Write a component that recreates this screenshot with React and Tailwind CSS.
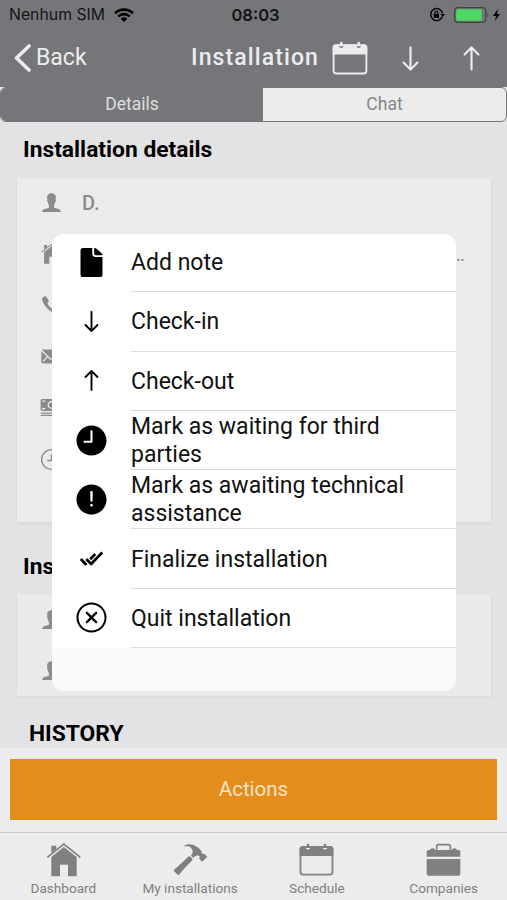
import {
  IoIosAlert,
  IoIosArrowRoundDown,
  IoIosArrowRoundUp,
  IoIosCall,
  IoIosCash,
  IoIosCloseCircleOutline,
  IoIosDocument,
  IoIosDoneAll,
  IoIosHammer,
  IoIosMail,
  IoIosPerson,
  IoIosTime,
} from "react-icons/io";

const ACTIONS = [
  { label: "Add note", icon: IoIosDocument },
  { label: "Check-in", icon: IoIosArrowRoundDown },
  { label: "Check-out", icon: IoIosArrowRoundUp },
  { label: "Mark as waiting for third parties", icon: IoIosTime },
  { label: "Mark as awaiting technical assistance", icon: IoIosAlert },
  { label: "Finalize installation", icon: IoIosDoneAll },
  { label: "Quit installation", icon: IoIosCloseCircleOutline },
];

const TABS = [
  { label: "Dashboard", icon: HomeIcon },
  { label: "My installations", icon: IoIosHammer },
  { label: "Schedule", icon: CalendarIcon },
  { label: "Companies", icon: BriefcaseIcon },
];

const DETAILS = [
  { icon: IoIosPerson, text: "D." },
  { icon: HomeIcon, text: "" },
  { icon: IoIosCall, text: "" },
  { icon: IoIosMail, text: "" },
  { icon: IoIosCash, text: "" },
  { icon: ClockIcon, text: "" },
];

function HomeIcon({ className }) {
  return (
    <svg viewBox="0 0 123 123" className={className} fill="currentColor">
      <path d="M13 55L62.5 15L112 55" fill="none" stroke="currentColor" strokeWidth="5" />
      <path d="M25 20h15v10L25 42z" />
      <path d="M25 54l37.5-30L101 54v58H75V77H51v35H25z" />
    </svg>
  );
}

function CalendarIcon({ className }) {
  return (
    <svg viewBox="0 0 123 123" className={className} fill="none">
      <rect x="13.5" y="24" width="96" height="83" rx="8" stroke="currentColor" strokeWidth="5.5" />
      <path d="M11 51V30q0-8 8-8h9q1 10 8 10t8-10h35q1 10 8 10t8-10h9q8 0 8 8v21z" fill="currentColor" />
      <path d="M36 18v5M87 18v5" stroke="currentColor" strokeWidth="8" strokeLinecap="round" />
    </svg>
  );
}

function BriefcaseIcon({ className }) {
  return (
    <svg viewBox="0 0 123 123" className={className} fill="currentColor">
      <path d="M41 32v-9q0-6 6-6h29q6 0 6 6v9" fill="none" stroke="currentColor" strokeWidth="5" />
      <path d="M11 53V38q0-5 5-5h5q1-5 8-5t8 5h49q1-5 8-5t8 5h5q5 0 5 5v15z" />
      <path d="M11 60h101v44q0 6-6 6H17q-6 0-6-6z" />
    </svg>
  );
}

function ClockIcon({ className }) {
  return (
    <svg viewBox="0 0 24 24" className={className} fill="none" stroke="currentColor" strokeWidth="1.3">
      <circle cx="12" cy="12" r="9.5" />
      <path d="M12 7v6H8" />
    </svg>
  );
}

function StatusBar() {
  return (
    <div className="flex h-[30px] items-center px-[9px] font-[Inter,sans-serif] text-[15.8px] text-black/85">
      <div className="flex flex-1 items-center gap-[9px]">
        <span>Nenhum SIM</span>
        <svg viewBox="0 0 20 14" className="h-[14px] w-5" fill="none" stroke="black" strokeWidth="2.6">
          <path d="M1 5.2a13 13 0 0 1 18 0M4.2 8.4a8.4 8.4 0 0 1 11.6 0" />
          <path d="M10 14l-3.3-3.3a4.7 4.7 0 0 1 6.6 0z" fill="black" stroke="none" />
        </svg>
      </div>
      <span className="ml-1 text-[16.5px] font-semibold">08:03</span>
      <div className="flex flex-1 items-center justify-end">
        <svg viewBox="0 0 16 16" className="mr-[9px] size-4" fill="none" stroke="black" strokeWidth="1.4">
          <path d="M13.4 9.5A6 6 0 1 1 13.6 6.5" />
          <path d="M11.5 7h4.5l-2.2 2.8z" fill="black" stroke="none" />
          <rect x="4.8" y="7" width="5.2" height="4" fill="black" stroke="none" />
          <path d="M5.9 7V5.8a1.5 1.5 0 0 1 3 0V7" strokeWidth="1.1" />
        </svg>
        <svg viewBox="0 0 48 16" className="-mr-[4px] h-4 w-12" fill="none">
          <rect x="0.7" y="0.7" width="31" height="14.6" rx="3.4" stroke="#3f4142" strokeWidth="1.2" />
          <rect x="2.2" y="2.3" width="25.5" height="11.4" rx="1.5" fill="#4cd964" />
          <path d="M33.3 5.5q2.2 2.5 0 5z" fill="#3f4142" />
          <path d="M44 2l-5 7h3.1L41 14l5-7h-3.1z" fill="black" />
        </svg>
      </div>
    </div>
  );
}

function Header() {
  return (
    <div className="flex h-[57px] items-center px-[13px] pb-px text-[#ececee]">
      <svg viewBox="0 0 18 28" className="h-7 w-[18px]" fill="none" stroke="currentColor" strokeWidth="3.6">
        <path d="M16 2L3.5 14L16 26" strokeLinecap="round" strokeLinejoin="round" />
      </svg>
      <span className="ml-[5px] text-[23px]">Back</span>
      <span className="ml-auto text-[23px] font-medium tracking-[1.1px]">Installation</span>
      <CalendarIcon className="ml-[10px] size-[42px]" />
      <IoIosArrowRoundDown className="ml-[18px] size-[43px]" />
      <IoIosArrowRoundUp className="-mr-[-1px] ml-[18px] size-[43px]" />
    </div>
  );
}

function ActionMenu() {
  return (
    <div className="absolute left-[52px] top-[234px] h-[457px] w-[404px] overflow-hidden rounded-xl bg-[#fafafa]">
      <ul className="-mt-[1px]">
        {ACTIONS.map(({ label, icon: Icon }) => (
          <li key={label} className="flex h-[59.3px] bg-white">
            <div className="flex w-[79px] items-center justify-center pb-px">
              <Icon className="size-[37px]" />
            </div>
            <div className="flex flex-1 items-center border-b border-[#dcdcde] pr-10 pt-[2px] text-[23px] leading-[28px] text-[#111]">
              {label}
            </div>
          </li>
        ))}
      </ul>
    </div>
  );
}

export default function App() {
  return (
    <div className="relative flex h-[900px] w-[507px] flex-col overflow-hidden bg-[#e3e3e5] font-[Roboto,sans-serif]">
      <div className="bg-[#757679]">
        <StatusBar />
        <Header />
      </div>

      {/* Details / Chat switch */}
      <div className="flex h-[35px] overflow-hidden rounded-md border border-[#757679] bg-[#ececec] text-[17.5px]">
        <div className="flex w-[262px] items-center justify-center bg-[#757679] text-[#dedede]">Details</div>
        <div className="flex flex-1 items-center justify-center text-[#858585]">Chat</div>
      </div>

      <div className="h-[626px] overflow-hidden">
        <h2 className="ml-[23px] mt-[12px] h-8 text-[22.8px] font-bold leading-8">Installation details</h2>
        <div className="ml-[17px] mt-[12px] h-[344px] w-[474px] bg-[#ebebeb] shadow-[0_1px_4px_rgba(0,0,0,0.06)]">
          {DETAILS.map(({ icon: Icon, text }, i) => (
            <div key={i} className="flex h-[51.3px] items-center pb-[2px] pl-[22px] text-[20px] text-[#8b8b8d]">
              <Icon className="size-[25px]" />
              <span className="ml-[18px] font-medium">{text}</span>
              {i === 1 && <span className="ml-auto mr-[26px]">…</span>}
            </div>
          ))}
        </div>
        <h2 className="ml-[23px] mt-[29px] h-8 text-[22.8px] font-bold leading-8">Installers</h2>
        <div className="ml-[17px] mt-[11px] h-[102px] w-[474px] bg-[#eaeaea] shadow-[0_1px_4px_rgba(0,0,0,0.06)]">
          {[0, 1].map((i) => (
            <div key={i} className="flex h-[51px] items-center pb-px pl-[22px] text-[#8b8b8d]">
              <IoIosPerson className="size-[25px]" />
            </div>
          ))}
        </div>
        <h2 className="ml-[29px] mt-[22px] text-[22.8px] font-bold leading-8">HISTORY</h2>
      </div>

      <div className="h-[84px] bg-[#ececec] px-[10px] pt-[11px]">
        <button className="h-[61px] w-full bg-[#e58d1b] pb-px text-[20.5px] text-[#f6e3cb]">Actions</button>
      </div>

      <nav className="grid h-[68px] grid-cols-4 border-t border-[#cacaca] bg-[#ececec] text-[#808080]">
        {TABS.map(({ label, icon: Icon }) => (
          <div key={label} className="flex flex-col items-center pt-[6px]">
            <Icon className="size-[41px]" />
            <span className="text-[13.6px] leading-[17px]">{label}</span>
          </div>
        ))}
      </nav>

      <ActionMenu />
    </div>
  );
}
